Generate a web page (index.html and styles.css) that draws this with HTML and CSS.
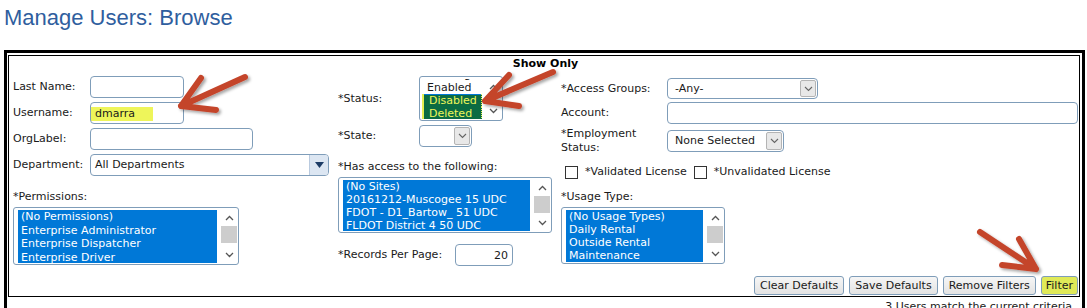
FILE: index.html
```html
<!DOCTYPE html>
<html lang="en">
<head>
  <meta charset="UTF-8" />
  <title>Manage Users: Browse</title>
  <link rel="stylesheet" href="styles.css">
</head>
<body>
  <h1 class="page-title">Manage Users: Browse</h1>

  <div class="outer">
    <form class="filters">
      <div class="show-only">Show Only</div>

      <div class="columns">
        <!-- left column -->
        <div class="col col-1">
          <div class="field">
            <label class="lbl">Last Name:</label>
            <input type="text" class="txt w-short" />
          </div>
          <div class="field">
            <label class="lbl">Username:</label>
            <input type="text" class="txt w-short marked" value="dmarra" />
          </div>
          <div class="field">
            <label class="lbl">OrgLabel:</label>
            <input type="text" class="txt w-org" />
          </div>
          <div class="field field-dept">
            <label class="lbl">Department:</label>
            <div class="dropdown w-dept">
              <span class="dd-text">All Departments</span>
              <span class="dd-btn dd-blue"><svg width="9" height="6" viewBox="0 0 9 6"><polygon points="0,0 9,0 4.5,6" fill="#1d3c66"/></svg></span>
            </div>
          </div>
          <div class="block-label">*Permissions:</div>
          <div class="listbox lb-perms">
            <ul class="options">
              <li class="sel">(No Permissions)</li>
              <li class="sel">Enterprise Administrator</li>
              <li class="sel">Enterprise Dispatcher</li>
              <li class="sel">Enterprise Driver</li>
            </ul>
            <div class="scroll">
              <span class="sb-btn"><svg width="9" height="6" viewBox="0 0 9 6"><polyline points="1,5 4.5,1.5 8,5" fill="none" stroke="#555" stroke-width="1.3"/></svg></span>
              <span class="thumb"></span>
              <span class="sb-fill"></span>
              <span class="sb-btn"><svg width="9" height="6" viewBox="0 0 9 6"><polyline points="1,1 4.5,4.5 8,1" fill="none" stroke="#555" stroke-width="1.3"/></svg></span>
            </div>
          </div>
        </div>

        <!-- middle column -->
        <div class="col col-2">
          <div class="field">
            <label class="lbl lbl-2">*Status:</label>
            <div class="listbox lb-status">
              <ul class="options">
                <li>Pending</li>
                <li>Enabled</li>
                <li class="hl first">Disabled</li>
                <li class="hl">Deleted</li>
              </ul>
              <div class="scroll">
                <span class="sb-btn"><svg width="9" height="6" viewBox="0 0 9 6"><polyline points="1,5 4.5,1.5 8,5" fill="none" stroke="#555" stroke-width="1.3"/></svg></span>
                <span class="sb-fill"></span>
                <span class="sb-btn"><svg width="9" height="6" viewBox="0 0 9 6"><polyline points="1,1 4.5,4.5 8,1" fill="none" stroke="#555" stroke-width="1.3"/></svg></span>
              </div>
            </div>
          </div>
          <div class="field">
            <label class="lbl lbl-2">*State:</label>
            <div class="dropdown w-state">
              <span class="dd-text"></span>
              <span class="dd-btn"><svg width="9" height="6" viewBox="0 0 9 6"><polyline points="1,1 4.5,4.5 8,1" fill="none" stroke="#666" stroke-width="1.1"/></svg></span>
            </div>
          </div>
          <div class="block-label access-label">*Has access to the following:</div>
          <div class="listbox lb-sites">
            <ul class="options">
              <li class="sel">(No Sites)</li>
              <li class="sel">20161212-Muscogee 15 UDC</li>
              <li class="sel">FDOT - D1_Bartow_ 51 UDC</li>
              <li class="sel">FLDOT District 4 50 UDC</li>
            </ul>
            <div class="scroll">
              <span class="sb-btn"><svg width="9" height="6" viewBox="0 0 9 6"><polyline points="1,5 4.5,1.5 8,5" fill="none" stroke="#555" stroke-width="1.3"/></svg></span>
              <span class="thumb"></span>
              <span class="sb-fill"></span>
              <span class="sb-btn"><svg width="9" height="6" viewBox="0 0 9 6"><polyline points="1,1 4.5,4.5 8,1" fill="none" stroke="#555" stroke-width="1.3"/></svg></span>
            </div>
          </div>
          <div class="field records">
            <label class="lbl lbl-rec">*Records Per Page:</label>
            <input type="text" class="txt w-rec" value="20" />
          </div>
        </div>

        <!-- right column -->
        <div class="col col-3">
          <div class="field">
            <label class="lbl lbl-3">*Access Groups:</label>
            <div class="dropdown w-groups">
              <span class="dd-text">-Any-</span>
              <span class="dd-btn"><svg width="9" height="6" viewBox="0 0 9 6"><polyline points="1,1 4.5,4.5 8,1" fill="none" stroke="#666" stroke-width="1.1"/></svg></span>
            </div>
          </div>
          <div class="field">
            <label class="lbl lbl-3">Account:</label>
            <input type="text" class="txt w-account" />
          </div>
          <div class="field">
            <label class="lbl lbl-3">*Employment<br>Status:</label>
            <div class="dropdown w-emp">
              <span class="dd-text">None Selected</span>
              <span class="dd-btn"><svg width="9" height="6" viewBox="0 0 9 6"><polyline points="1,1 4.5,4.5 8,1" fill="none" stroke="#666" stroke-width="1.1"/></svg></span>
            </div>
          </div>
          <div class="checks">
            <label class="check"><span class="box"></span>*Validated License</label>
            <label class="check"><span class="box"></span>*Unvalidated License</label>
          </div>
          <div class="block-label usage-label">*Usage Type:</div>
          <div class="listbox lb-usage">
            <ul class="options">
              <li class="sel">(No Usage Types)</li>
              <li class="sel">Daily Rental</li>
              <li class="sel">Outside Rental</li>
              <li class="sel">Maintenance</li>
            </ul>
            <div class="scroll">
              <span class="sb-btn"><svg width="9" height="6" viewBox="0 0 9 6"><polyline points="1,5 4.5,1.5 8,5" fill="none" stroke="#555" stroke-width="1.3"/></svg></span>
              <span class="thumb"></span>
              <span class="sb-fill"></span>
              <span class="sb-btn"><svg width="9" height="6" viewBox="0 0 9 6"><polyline points="1,1 4.5,4.5 8,1" fill="none" stroke="#555" stroke-width="1.3"/></svg></span>
            </div>
          </div>
        </div>
      </div>

      <div class="actions">
        <button type="button" class="btn">Clear Defaults</button>
        <button type="button" class="btn">Save Defaults</button>
        <button type="button" class="btn">Remove Filters</button>
        <button type="button" class="btn btn-marked">Filter</button>
      </div>
    </form>

    <div class="result">3 Users match the current criteria</div>
  </div>

  <!-- annotation arrows drawn over the screenshot -->
  <svg class="marks" width="1087" height="308" viewBox="0 0 1087 308">
    <defs>
      <filter id="shadow" x="-20%" y="-20%" width="140%" height="140%">
        <feDropShadow dx="2" dy="2" stdDeviation="1.5" flood-color="#000" flood-opacity="0.35"/>
      </filter>
    </defs>
    <g fill="none" stroke="#c4442c" stroke-width="6" stroke-linecap="round" stroke-linejoin="round" filter="url(#shadow)">
      <path d="M201 78 L181 106 L216 110 M181 106 L245 77"/>
      <path d="M509 75 L485 101 L519 106 M485 101 L553 72"/>
      <path d="M1019 239 L1036 269 L1002 265 M1036 269 L980 232"/>
    </g>
  </svg>
</body>
</html>
```

FILE: styles.css
```css
* {
  box-sizing: border-box;
}

body {
  margin: 0;
  padding: 0 0 0 4px;
  font-family: "DejaVu Sans", Verdana, sans-serif;
  font-size: 11px;
  color: #1a1a1a;
  background: #fff;
  overflow: hidden;
}

.page-title {
  font-family: "Liberation Sans", Arial, sans-serif;
  font-weight: normal;
  font-size: 22px;
  line-height: 25px;
  color: #2f5e9e;
  margin: 5px 0 20px 0;
}

.outer {
  width: 1081px;
  height: 280px;
  border: 3px solid #000;
  border-bottom: none;
  padding: 2px 2px 0 1px;
}

.filters {
  margin: 0;
  border: 1px solid #000;
  padding: 0 1px 1px 4px;
}

.show-only {
  text-align: center;
  font-weight: bold;
  line-height: 14px;
  margin-top: 1px;
  color: #000;
}

.columns {
  display: grid;
  grid-template-columns: 325px 223px 1fr;
  margin-top: 5px;
}

.col {
  display: flex;
  flex-direction: column;
  align-items: flex-start;
}

.col-3 {
  padding-top: 2px;
}

.field {
  display: flex;
  align-items: center;
  line-height: 14px;
}

.col-1 .field + .field {
  margin-top: 4px;
}

.col-1 .field-dept {
  margin-top: 5px;
}

.col-2 .field + .field {
  margin-top: 4px;
}

.col-3 .field + .field {
  margin-top: 3px;
}

.lbl {
  width: 77px;
  flex: none;
}

.lbl-2 {
  width: 81px;
}

.lbl-3 {
  width: 106px;
}

.lbl-rec {
  width: 117px;
}

.block-label {
  line-height: 14px;
  margin-top: 14px;
  margin-bottom: 3px;
}

.access-label {
  margin-top: 13px;
}

.usage-label {
  margin-top: 11px;
}

.txt {
  height: 22px;
  border: 1px solid #7f9db9;
  border-radius: 4px;
  padding: 0 4px;
  font-family: inherit;
  font-size: 11px;
  color: #1a1a1a;
  background: #fff;
  outline: none;
}

.marked {
  background-image: linear-gradient(#eef55a, #eef55a);
  background-size: 62px 14px;
  background-position: 0 4px;
  background-repeat: no-repeat;
}

.w-short {
  width: 94px;
}

.w-org {
  width: 163px;
}

.w-account {
  width: 411px;
}

.w-rec {
  width: 58px;
  text-align: right;
}

.dropdown {
  display: flex;
  align-items: stretch;
  height: 22px;
  border: 1px solid #7f9db9;
  border-radius: 4px;
  background: #fff;
  overflow: hidden;
}

.dd-text {
  flex: 1;
  display: flex;
  align-items: center;
  padding-left: 7px;
  white-space: nowrap;
}

.dd-btn {
  width: 16px;
  margin: 1px;
  display: flex;
  align-items: center;
  justify-content: center;
  background: #e8e8e8;
  border: 1px solid #b4b4b4;
  border-radius: 2px;
}

.dd-blue {
  width: 19px;
  margin: 0;
  background: #dce6f2;
  border: none;
  border-left: 1px solid #b9cadf;
  border-radius: 0;
}

.w-dept {
  width: 239px;
}

.w-dept .dd-text {
  padding-left: 4px;
}

.w-state {
  width: 53px;
  height: 22px;
}

.w-groups {
  width: 151px;
  height: 21px;
}

.w-emp {
  width: 117px;
}

.listbox {
  display: flex;
  border: 1px solid #7f9db9;
  border-radius: 3px;
  padding: 2px 1px 1px 4px;
  background: #fff;
  overflow: hidden;
}

.options {
  flex: 1;
  margin: 0 4px 0 0;
  padding: 0;
  list-style: none;
  overflow: hidden;
}

.options li {
  line-height: 13.5px;
  padding-left: 3px;
  white-space: nowrap;
}

.options .sel {
  background: #0078d7;
  color: #fff;
}

.scroll {
  width: 16px;
  display: flex;
  flex-direction: column;
}

.sb-btn {
  height: 16px;
  display: flex;
  align-items: center;
  justify-content: center;
}

.thumb {
  height: 17px;
  background: #cdcdcd;
}

.sb-fill {
  flex: 1;
}

.lb-perms {
  width: 226px;
  height: 58px;
}

.lb-sites {
  width: 214px;
  height: 56px;
}

.lb-sites .options li,
.lb-usage .options li {
  line-height: 13px;
}

.lb-usage {
  width: 164px;
  height: 57px;
}

.lb-status {
  width: 84px;
  height: 45px;
  padding-left: 2px;
}

.lb-status .options {
  margin-right: 3px;
}

.lb-status .options li {
  line-height: 13px;
  padding-left: 5px;
}

.lb-status .options li:first-child {
  margin-top: -11px;
}

.lb-status .hl {
  background: #0b6b43;
  color: #eef55a;
  border-left: 2px solid #e6ef52;
  border-right: 1px dotted #eef55a;
  padding-left: 3px;
}

.lb-status .first {
  box-shadow: inset 0 1px 0 #0078d7;
}

.records {
  margin-top: 11px;
}

.checks {
  display: flex;
  align-items: center;
  margin-top: 10px;
  line-height: 14px;
  padding-left: 4px;
}

.check {
  display: flex;
  align-items: center;
}

.check + .check {
  margin-left: 7px;
}

.box {
  width: 13px;
  height: 13px;
  border: 1px solid #333;
  background: #fff;
  margin-right: 7px;
}

.actions {
  display: flex;
  justify-content: flex-end;
  gap: 5px;
  margin-top: 10px;
}

.btn {
  height: 19px;
  padding: 0 5px;
  border: 1px solid #7f9db9;
  border-radius: 3px;
  background: linear-gradient(#f6f6f6, #e3e3e3);
  font-family: inherit;
  font-size: 11px;
  color: #1a1a1a;
  line-height: 17px;
}

.btn-marked {
  background: #e0ea58;
  padding: 0 4px;
}

.result {
  margin-top: 3px;
  text-align: right;
  padding-right: 8px;
  line-height: 14px;
}

.marks {
  position: absolute;
  top: 0;
  left: 0;
  pointer-events: none;
}
```
